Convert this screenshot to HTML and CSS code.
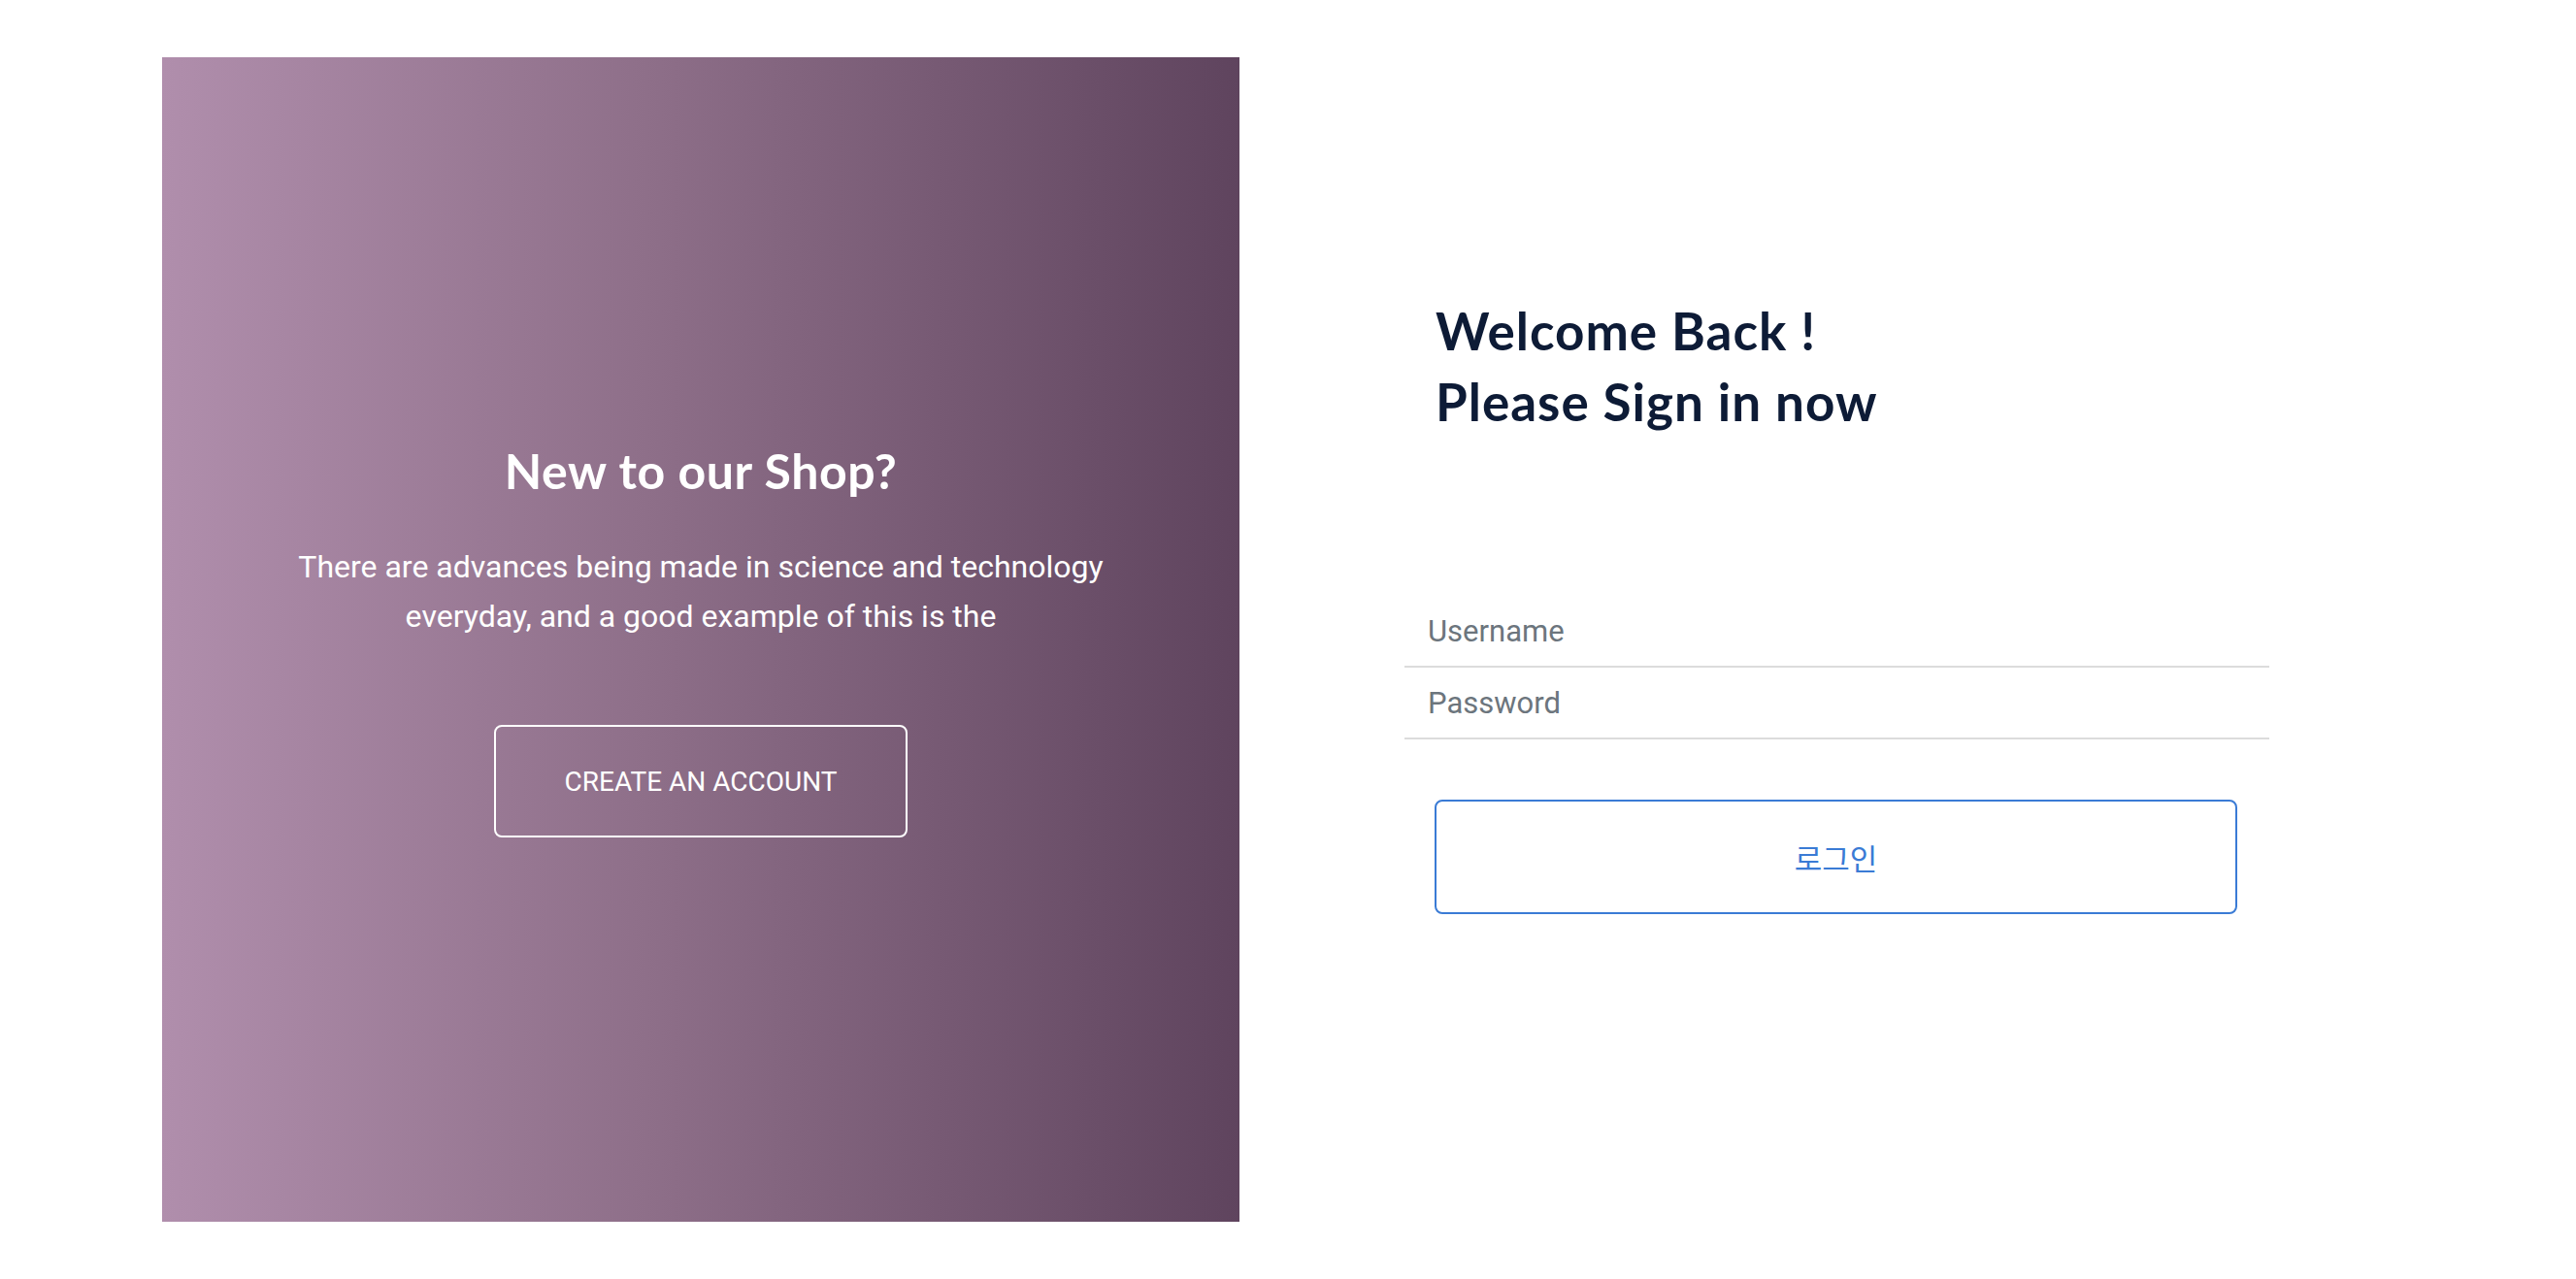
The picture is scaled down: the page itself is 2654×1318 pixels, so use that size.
FILE: index.html
```html
<!DOCTYPE html>
<html lang="ko">
<head>
<meta charset="utf-8">
<title>Sign in</title>
<link rel="stylesheet" href="styles.css">
</head>
<body>
<div class="page">
  <section class="promo">
    <h2 class="promo-title">New to our Shop?</h2>
    <p class="promo-text">There are advances being made in science and technology everyday, and a good example of this is the</p>
    <a class="promo-btn" href="#">CREATE AN ACCOUNT</a>
  </section>
  <section class="login">
    <h3 class="login-title">Welcome Back !<br>Please Sign in now</h3>
    <form class="login-form">
      <input class="field" type="text" placeholder="Username">
      <input class="field" type="password" placeholder="Password">
      <button class="login-btn" type="button">로그인</button>
    </form>
  </section>
</div>
</body>
</html>
```

FILE: styles.css
```css
html, body {
  margin: 0;
  padding: 0;
  background: #ffffff;
}
body {
  font-family: Roboto, "Noto Sans CJK KR", sans-serif;
}
.page {
  display: flex;
  align-items: flex-start;
  padding: 59px 0 0 167px;
}
.promo {
  width: 1110px;
  height: 1200px;
  box-sizing: border-box;
  background: linear-gradient(to right, #b08eac 0%, #8e6f89 45%, #5f445e 100%);
  display: flex;
  flex-direction: column;
  align-items: center;
  justify-content: center;
  padding: 0 90px;
  color: #ffffff;
  text-align: center;
}
.promo-title {
  font-family: Lato, sans-serif;
  font-weight: 700;
  font-size: 50px;
  line-height: 60px;
  margin: 0 0 44px;
  letter-spacing: 0.6px;
}
.promo-text {
  font-size: 32px;
  line-height: 51px;
  margin: 0 0 86px;
  max-width: 920px;
}
.promo-btn {
  display: flex;
  align-items: center;
  justify-content: center;
  width: 426px;
  height: 116px;
  box-sizing: border-box;
  border: 2px solid #ffffff;
  border-radius: 8px;
  color: #ffffff;
  text-decoration: none;
  font-size: 28px;
}
.login {
  width: 891px;
  margin-left: 170px;
  padding-top: 245px;
}
.login-title {
  font-family: Lato, sans-serif;
  font-weight: 700;
  font-size: 53px;
  line-height: 73px;
  color: #0d1b36;
  margin: 0 0 164px 32px;
  letter-spacing: 1px;
}
.login-form {
  display: flex;
  flex-direction: column;
}
.field {
  height: 74px;
  box-sizing: border-box;
  border: none;
  border-bottom: 2px solid #dcdcdc;
  padding: 0 24px;
  font-family: Roboto, sans-serif;
  font-size: 31px;
  color: #495057;
  outline: none;
  background: transparent;
}
.field::placeholder {
  color: #6c757d;
}
.login-btn {
  margin: 62px 33px 0 31px;
  height: 118px;
  border: 2px solid #3a7bd5;
  border-radius: 8px;
  background: #ffffff;
  color: #3a7bd5;
  font-family: "Noto Sans CJK KR", sans-serif;
  font-size: 31px;
}
```
